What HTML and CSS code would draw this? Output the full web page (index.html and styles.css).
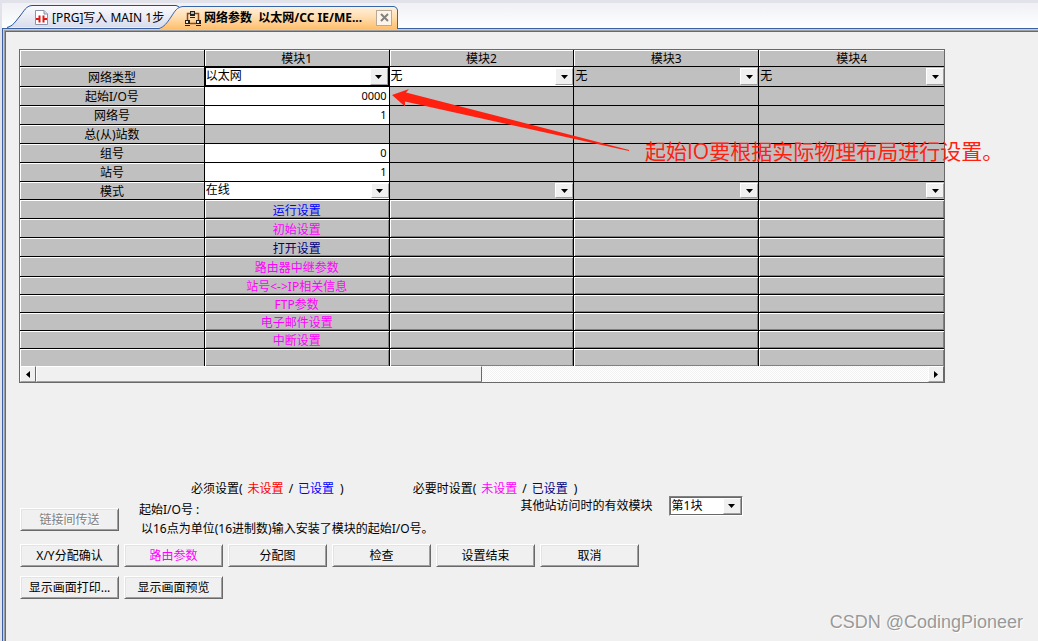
FILE: index.html
```html
<!DOCTYPE html>
<html lang="zh-CN">
<head>
<meta charset="utf-8">
<title>网络参数</title>
<link rel="stylesheet" href="styles.css">
</head>
<body>
<nav class="tabs">
  <div class="tab tab-program">
    <svg class="tab-shape" width="176" height="23" viewBox="0 0 176 23" aria-hidden="true">
      <defs><linearGradient id="g1" x1="0" y1="0" x2="0" y2="1"><stop offset="0" stop-color="#fbfbfe"/><stop offset="1" stop-color="#d8dbec"/></linearGradient></defs>
      <path d="M0 22.5 C6 21 8 17 13 11 C17 6 19 1 25 .5 H169 Q172 1 174 4 V22.5" fill="url(#g1)" stroke="#1c4f9c"/>
    </svg>
    <button class="tab-label" type="button">
      <svg width="13" height="15" viewBox="0 0 13 15" aria-hidden="true"><path d="M.5 .5H9L12.500 4V14.500H.5Z" fill="#fff" stroke="#8a94a8"/><path d="M9 .5V4H12.500" fill="#d5dbe6" stroke="#8a94a8"/><path d="M1 9H4M9 9H12" stroke="#e01818" stroke-width="2" fill="none"/><path d="M4.500 5.500V12.500M8.500 5.500V12.500" stroke="#e01818" stroke-width="2" fill="none"/></svg>
      <span>[PRG]写入 MAIN 1步</span>
    </button>
  </div>
  <div class="tab tab-network">
    <svg class="tab-shape" width="239" height="23" viewBox="0 0 239 23" aria-hidden="true">
      <defs><linearGradient id="g2" x1="0" y1="0" x2="0" y2="1"><stop offset="0" stop-color="#fff1df"/><stop offset=".5" stop-color="#ffdcae"/><stop offset="1" stop-color="#ffbf6c"/></linearGradient></defs>
      <path d="M0 22.500 C5 21 8 17 12 11 C16 5 18 1 24 .5 H235 Q238 1 238.500 4 V23 H0Z" fill="url(#g2)"/>
      <path d="M0 22.500 C5 21 8 17 12 11 C16 5 18 1 24 .5 H235 Q238 1 238.500 4 V23" fill="none" stroke="#3565ab"/>
    </svg>
    <button class="tab-label" type="button">
      <svg width="16" height="16" viewBox="0 0 16 16" aria-hidden="true"><path d="M6 3.500H2.500V11M10 3.500H13.500V11M5 13.500H11" fill="none" stroke="#8a4a18" stroke-width="1.500"/><path d="M5 1H10V6H5Z" fill="#222"/><path d="M6 2H9V4H6Z" fill="#b9b9b9"/><path d="M5 7.500H10" stroke="#222"/><path d="M0 10H5V14H0ZM11 10H16V14H11Z" fill="#222"/><path d="M1 11H3V13H1ZM12 11H14V13H12Z" fill="#e8e8e8"/><path d="M0 15.500H5M11 15.500H16" stroke="#222"/></svg>
      <span>网络参数&nbsp; 以太网/CC IE/ME...</span>
    </button>
    <button class="tab-close" type="button" aria-label="关闭"><svg width="9" height="9" viewBox="0 0 9 9" aria-hidden="true"><path d="M1 1L8 8M8 1L1 8" stroke="#85817c" stroke-width="2"/></svg></button>
  </div>
</nav>

<main class="panel">
  <div class="grid-frame">
    <table class="grid">
      <thead>
        <tr class="h17"><th></th><th>模块1</th><th>模块2</th><th>模块3</th><th>模块4</th></tr>
      </thead>
      <tbody>
        <tr class="h20"><th scope="row">网络类型</th>
          <td class="white"><span class="combo focused"><select aria-label="模块1 网络类型"><option>以太网</option></select></span></td>
          <td class="white"><span class="combo"><select aria-label="模块2 网络类型"><option>无</option></select></span></td>
          <td><span class="combo"><select aria-label="模块3 网络类型"><option>无</option></select></span></td>
          <td><span class="combo"><select aria-label="模块4 网络类型"><option>无</option></select></span></td></tr>
        <tr class="h19"><th scope="row">起始I/O号</th><td class="white"><input class="num" aria-label="起始I/O号" value="0000"></td><td></td><td></td><td></td></tr>
        <tr class="h19"><th scope="row">网络号</th><td class="white"><input class="num" aria-label="网络号" value="1"></td><td></td><td></td><td></td></tr>
        <tr class="h19"><th scope="row">总(从)站数</th><td></td><td></td><td></td><td></td></tr>
        <tr class="h19"><th scope="row">组号</th><td class="white"><input class="num" aria-label="组号" value="0"></td><td></td><td></td><td></td></tr>
        <tr class="h19"><th scope="row">站号</th><td class="white"><input class="num" aria-label="站号" value="1"></td><td></td><td></td><td></td></tr>
        <tr class="h18"><th scope="row">模式</th>
          <td class="white"><span class="combo"><select aria-label="模块1 模式"><option>在线</option></select></span></td>
          <td><span class="combo"><select aria-label="模块2 模式"><option></option></select></span></td>
          <td><span class="combo"><select aria-label="模块3 模式"><option></option></select></span></td>
          <td><span class="combo"><select aria-label="模块4 模式"><option></option></select></span></td></tr>
        <tr class="h19 raised"><th></th><td><button class="cell blue" type="button">运行设置</button></td><td></td><td></td><td></td></tr>
        <tr class="h19 raised"><th></th><td><button class="cell magenta" type="button">初始设置</button></td><td></td><td></td><td></td></tr>
        <tr class="h19 raised"><th></th><td><button class="cell navy" type="button">打开设置</button></td><td></td><td></td><td></td></tr>
        <tr class="h20 raised"><th></th><td><button class="cell magenta" type="button">路由器中继参数</button></td><td></td><td></td><td></td></tr>
        <tr class="h18 raised"><th></th><td><button class="cell magenta" type="button">站号&lt;-&gt;IP相关信息</button></td><td></td><td></td><td></td></tr>
        <tr class="h18 raised"><th></th><td><button class="cell magenta" type="button">FTP参数</button></td><td></td><td></td><td></td></tr>
        <tr class="h18 raised"><th></th><td><button class="cell magenta" type="button">电子邮件设置</button></td><td></td><td></td><td></td></tr>
        <tr class="h18 raised"><th></th><td><button class="cell magenta" type="button">中断设置</button></td><td></td><td></td><td></td></tr>
        <tr class="h17 raised last"><th></th><td></td><td></td><td></td><td></td></tr>
      </tbody>
    </table>
    <div class="scrollbar">
      <button class="scroll-btn" type="button" aria-label="向左滚动"><svg width="4" height="7" viewBox="0 0 4 7" aria-hidden="true"><path d="M4 0V7L0 3.500Z"/></svg></button>
      <div class="track"><div class="thumb"></div></div>
      <button class="scroll-btn" type="button" aria-label="向右滚动"><svg width="4" height="7" viewBox="0 0 4 7" aria-hidden="true"><path d="M0 0V7L4 3.500Z"/></svg></button>
    </div>
  </div>

  <section class="legend">
    <p class="legend-item"><span>必须设置(</span><span class="red">未设置</span><span>/</span><span class="blue">已设置</span><span>)</span></p>
    <p class="legend-item"><span>必要时设置(</span><span class="magenta">未设置</span><span>/</span><span class="navy">已设置</span><span>)</span></p>
  </section>

  <section class="info">
    <button class="btn" type="button" disabled>链接间传送</button>
    <div class="hint"><p>起始I/O号 :</p><p>以16点为单位(16进制数)输入安装了模块的起始I/O号。</p></div>
    <div class="valid">
      <label for="valid-module">其他站访问时的有效模块</label>
      <span class="combo boxed"><select id="valid-module"><option>第1块</option></select></span>
    </div>
  </section>

  <section class="actions">
    <button class="btn" type="button">X/Y分配确认</button>
    <button class="btn magenta" type="button">路由参数</button>
    <button class="btn" type="button">分配图</button>
    <button class="btn" type="button">检查</button>
    <button class="btn" type="button">设置结束</button>
    <button class="btn" type="button">取消</button>
  </section>
  <section class="actions">
    <button class="btn" type="button">显示画面打印...</button>
    <button class="btn" type="button">显示画面预览</button>
  </section>
</main>

<svg class="arrow" width="237" height="18" viewBox="0 0 237 18" aria-hidden="true"><path d="M0 6L17 0L14 3.500L237 61L237 62L13 12.500L13 17.500Z" fill="#ff2010"/></svg>
<p class="note">起始IO要根据实际物理布局进行设置。</p>
<p class="watermark">CSDN @CodingPioneer</p>
</body>
</html>
```

FILE: styles.css
```css
* { box-sizing: border-box; }

body {
  position: relative;
  display: flex;
  flex-direction: column;
  min-height: 100vh;
  margin: 0;
  padding-left: 2px;
  background: #e1e2ea;
  color: #000;
  font: 12px/14px "Noto Sans", "Noto Sans CJK SC", sans-serif;
}

p { margin: 0; }
button, input, select { margin: 0; padding: 0; border: 0; border-radius: 0; background: none; color: inherit; font: inherit; }
button { white-space: nowrap; }

.red { color: #f00; }
.blue { color: #00f; }
.navy { color: #000080; }
.magenta { color: #f0f; }

/* Document tabs */
.tabs {
  display: flex;
  align-items: flex-end;
  height: 25px;
  margin-top: 3px;
  padding-left: 5px;
  background: linear-gradient(#f1f1f5, #fdfeff);
}
.tab { position: relative; display: flex; align-items: center; height: 23px; }
.tab-program { width: 176px; padding-left: 28px; }
.tab-network { z-index: 1; width: 239px; margin: 0 0 -1px -24px; padding-left: 26px; padding-right: 6px; justify-content: space-between; font-weight: 700; }
.tab-shape { position: absolute; top: 0; left: 0; }
.tab-label { position: relative; display: flex; align-items: center; gap: 4px; padding-top: 2px; }
.tab-network .tab-label { gap: 3px; padding-top: 0; }
.tab-close { position: relative; display: flex; align-items: center; justify-content: center; width: 16px; height: 16px; border: 1px solid #b8aa98; background: #fdf5ea; }

/* Work area */
.panel {
  flex: 1;
  padding: 20px 93px 24px 16px;
  border: solid #3a62a3;
  border-width: 1px 0 0 1px;
  background: #f0f0f0;
  box-shadow: inset 1px 1px #f5c48c, inset 2px 2px #a0a0a0, inset 3px 3px #696969;
}

/* Parameter grid */
.grid-frame { border: 1px solid #696969; }
.grid { width: 100%; border-spacing: 0; table-layout: fixed; background: #c0c0c0; }
.grid th, .grid td { padding: 0; border: solid #000; border-width: 0 1px 1px 0; font-weight: 400; vertical-align: middle; }
.grid th { padding-top: 2px; box-shadow: inset 1px 1px #fff; text-align: center; }
.grid tr > :last-child { border-right: 0; }
.grid .raised td { box-shadow: inset 1px 1px #fff, inset -1px -1px #808080; }
.grid .last > * { border-bottom: 0; }
.grid .white { background: #fff; }
.h17 > * { height: 17px; }
.h18 > * { height: 18px; }
.h19 > * { height: 19px; }
.h20 > * { height: 20px; }
.num { display: block; width: 100%; height: 16px; padding: 0 2px 2px 0; font-size: 11px; line-height: 14px; text-align: right; }
.cell { display: block; width: 100%; height: 17px; padding-top: 2px; line-height: 15px; text-align: center; }

.combo { position: relative; display: block; height: 17px; }
.h20 .combo { height: 19px; }
.combo select { display: block; width: 100%; height: 100%; padding: 0 18px 1px 1px; appearance: none; outline: 0; }
.combo::after {
  content: "";
  position: absolute;
  top: 1px;
  right: 0;
  bottom: 1px;
  width: 16px;
  border: 1px solid #fff;
  border-right-color: #a0a0a0;
  border-bottom-color: #a0a0a0;
  background: #f0f0f0 url("data:image/svg+xml,%3Csvg xmlns='http://www.w3.org/2000/svg' width='7' height='4'%3E%3Cpath d='M0 0H7L3.5 4Z'/%3E%3C/svg%3E") center no-repeat;
  pointer-events: none;
}
.focused { box-shadow: inset 0 0 0 1px #000; }
.focused::after { right: 1px; }

.scrollbar { display: flex; height: 16px; }
.scroll-btn, .thumb { border: 1px solid #fff; border-right-color: #696969; border-bottom-color: #a0a0a0; background: #f0f0f0; }
.scroll-btn { display: flex; align-items: center; justify-content: center; width: 16px; }
.track { flex: 1; background: repeating-conic-gradient(#fff 0 25%, #f2f2f2 0 50%) 0 0 / 2px 2px; }
.thumb { width: 50%; height: 100%; }

/* Legend and hints */
.legend { display: flex; gap: 69px; margin: 99px 0 0 172px; }
.legend-item { display: flex; gap: 5px; white-space: nowrap; }
.legend-item :last-child { padding-left: 1px; }

.info { display: flex; align-items: flex-start; gap: 20px; margin-left: 1px; }
.info .btn { margin-top: 12px; }
.hint { display: grid; gap: 5px; padding-top: 7px; white-space: nowrap; }
.hint p + p { padding-left: 2px; }
.valid { display: flex; align-items: center; gap: 16px; margin-left: 67px; white-space: nowrap; }
.boxed { width: 74px; height: 20px; border: 1px solid #808080; border-right-color: #fff; border-bottom-color: #fff; background: #fff; box-shadow: inset 0 0 0 1px #696969; }
.boxed select { padding: 0 18px 0 2px; }
.boxed::after { right: 1px; }

/* Push buttons */
.actions { display: flex; gap: 5px; margin: 8px 0 0 1px; }
.actions + .actions { margin-top: 9px; }
.btn {
  flex: none;
  width: 99px;
  height: 23px;
  border: 1px solid #fff;
  border-right-color: #696969;
  border-bottom-color: #696969;
  background: #f0f0f0;
  box-shadow: inset 1px 1px #e3e3e3, inset -1px -1px #a0a0a0;
}
.btn:disabled { color: #808080; text-shadow: 1px 1px #fff; }

/* Overlaid annotation */
.arrow { position: absolute; top: 89px; left: 392px; overflow: visible; pointer-events: none; }
.note { position: absolute; top: 137px; left: 645px; color: #ff2010; font-family: "Open Sans", "Noto Sans CJK SC", sans-serif; font-size: 21px; line-height: 28px; white-space: nowrap; }
.watermark { position: absolute; right: 15px; bottom: 8px; color: #999; font-family: "Liberation Sans", sans-serif; font-size: 18px; line-height: 22px; text-shadow: 1px 1px #fff; }
```
